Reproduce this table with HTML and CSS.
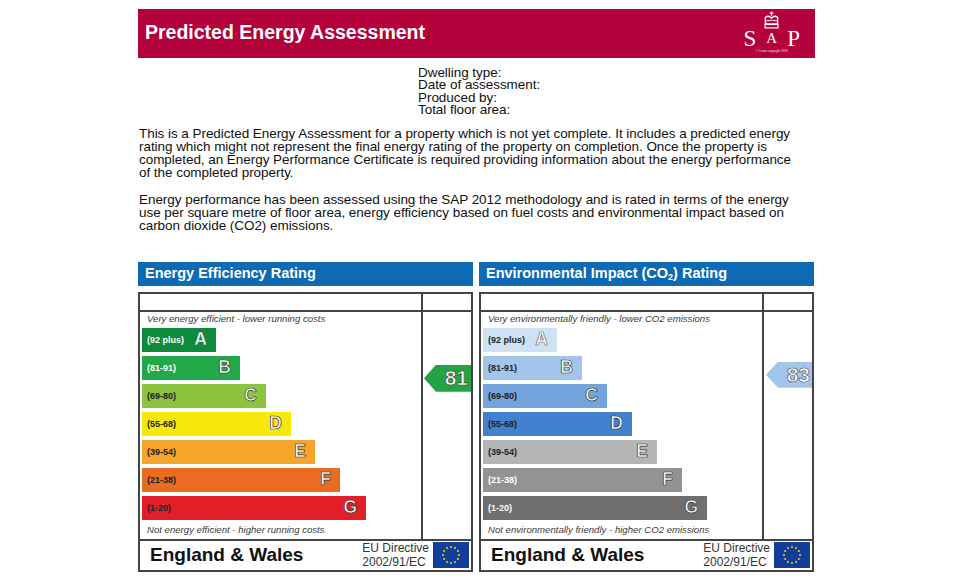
FILE: index.html
```html
<!DOCTYPE html>
<html lang="en">
<head>
<meta charset="utf-8">
<title>Predicted Energy Assessment</title>
<link rel="stylesheet" href="styles.css">
</head>
<body>
<div class="page">
  <header class="banner">
    <h1 class="banner-title">Predicted Energy Assessment</h1>
    <div class="sap">
      <div class="sap-letters">
        <span class="sap-big">S</span>
        <span class="sap-mid">
          <svg class="crown" width="15" height="18" viewBox="0 0 15 18">
            <path d="M7.5 0.4v4.4M5.6 2.2h3.8" stroke="#fff" stroke-width="1.3" fill="none"/>
            <path d="M1.4 12.8V6.4Q4.3 3.8 7.5 7Q10.7 3.8 13.6 6.4V12.8Z" stroke="#fff" stroke-width="1.3" fill="none"/>
            <path d="M1.4 10Q7.5 8.4 13.6 10" stroke="#fff" stroke-width="0.9" fill="none"/>
            <rect x="1" y="13.5" width="13" height="3.4" fill="none" stroke="#fff" stroke-width="1.2"/>
          </svg>
          <span class="sap-a">A</span>
        </span>
        <span class="sap-big">P</span>
      </div>
      <div class="sap-copy">© Crown copyright 2009</div>
    </div>
  </header>

  <div class="details">
    <div>Dwelling type:</div>
    <div>Date of assessment:</div>
    <div>Produced by:</div>
    <div>Total floor area:</div>
  </div>

  <p class="intro intro-first">This is a Predicted Energy Assessment for a property which is not yet complete. It includes a predicted energy<br>rating which might not represent the final energy rating of the property on completion. Once the property is<br>completed, an Energy Performance Certificate is required providing information about the energy performance<br>of the completed property.</p>
  <p class="intro intro-second">Energy performance has been assessed using the SAP 2012 methodology and is rated in terms of the energy<br>use per square metre of floor area, energy efficiency based on fuel costs and environmental impact based on<br>carbon dioxide (CO2) emissions.</p>

  <div class="charts">
    <section class="chart">
      <h2 class="chart-title">Energy Efficiency Rating</h2>
      <div class="chart-box">
        <div class="cell top-left"></div>
        <div class="cell top-right"></div>
        <div class="cell bands">
          <div class="caption">Very energy efficient - lower running costs</div>
          <div class="band-list">
            <div class="band ee-a light" style="width:74px"><span class="range">(92 plus)</span><span class="grade">A</span></div>
            <div class="band ee-b light" style="width:98px"><span class="range">(81-91)</span><span class="grade">B</span></div>
            <div class="band ee-c" style="width:124px"><span class="range">(69-80)</span><span class="grade">C</span></div>
            <div class="band ee-d" style="width:149px"><span class="range">(55-68)</span><span class="grade">D</span></div>
            <div class="band ee-e" style="width:173px"><span class="range">(39-54)</span><span class="grade">E</span></div>
            <div class="band ee-f" style="width:198px"><span class="range">(21-38)</span><span class="grade">F</span></div>
            <div class="band ee-g" style="width:224px"><span class="range">(1-20)</span><span class="grade">G</span></div>
          </div>
          <div class="caption caption-bottom">Not energy efficient - higher running costs</div>
        </div>
        <div class="cell current">
          <div class="pointer pointer-ee" style="margin-top:53px"><span>81</span></div>
        </div>
        <div class="chart-footer">
          <span class="region">England &amp; Wales</span>
          <span class="directive">EU Directive<br>2002/91/EC</span>
          <svg class="eu-flag" width="36" height="26" viewBox="0 0 36 26">
            <rect width="36" height="26" fill="#123d9a"/>
            <g fill="#f4d31a">
              <circle cx="18" cy="5" r="1"/>
              <circle cx="22" cy="6.1" r="1"/>
              <circle cx="24.9" cy="9" r="1"/>
              <circle cx="26" cy="13" r="1"/>
              <circle cx="24.9" cy="17" r="1"/>
              <circle cx="22" cy="19.9" r="1"/>
              <circle cx="18" cy="21" r="1"/>
              <circle cx="14" cy="19.9" r="1"/>
              <circle cx="11.1" cy="17" r="1"/>
              <circle cx="10" cy="13" r="1"/>
              <circle cx="11.1" cy="9" r="1"/>
              <circle cx="14" cy="6.1" r="1"/>
            </g>
          </svg>
        </div>
      </div>
    </section>

    <section class="chart">
      <h2 class="chart-title">Environmental Impact (CO<sub>2</sub>) Rating</h2>
      <div class="chart-box">
        <div class="cell top-left"></div>
        <div class="cell top-right"></div>
        <div class="cell bands">
          <div class="caption">Very environmentally friendly - lower CO2 emissions</div>
          <div class="band-list">
            <div class="band ei-a" style="width:74px"><span class="range">(92 plus)</span><span class="grade">A</span></div>
            <div class="band ei-b" style="width:99px"><span class="range">(81-91)</span><span class="grade">B</span></div>
            <div class="band ei-c" style="width:124px"><span class="range">(69-80)</span><span class="grade">C</span></div>
            <div class="band ei-d" style="width:149px"><span class="range">(55-68)</span><span class="grade">D</span></div>
            <div class="band ei-e" style="width:174px"><span class="range">(39-54)</span><span class="grade">E</span></div>
            <div class="band ei-f light" style="width:199px"><span class="range">(21-38)</span><span class="grade">F</span></div>
            <div class="band ei-g light" style="width:224px"><span class="range">(1-20)</span><span class="grade">G</span></div>
          </div>
          <div class="caption caption-bottom">Not environmentally friendly - higher CO2 emissions</div>
        </div>
        <div class="cell current">
          <div class="pointer pointer-ei" style="margin-top:50px"><span>83</span></div>
        </div>
        <div class="chart-footer">
          <span class="region">England &amp; Wales</span>
          <span class="directive">EU Directive<br>2002/91/EC</span>
          <svg class="eu-flag" width="36" height="26" viewBox="0 0 36 26">
            <rect width="36" height="26" fill="#123d9a"/>
            <g fill="#f4d31a">
              <circle cx="18" cy="5" r="1"/>
              <circle cx="22" cy="6.1" r="1"/>
              <circle cx="24.9" cy="9" r="1"/>
              <circle cx="26" cy="13" r="1"/>
              <circle cx="24.9" cy="17" r="1"/>
              <circle cx="22" cy="19.9" r="1"/>
              <circle cx="18" cy="21" r="1"/>
              <circle cx="14" cy="19.9" r="1"/>
              <circle cx="11.1" cy="17" r="1"/>
              <circle cx="10" cy="13" r="1"/>
              <circle cx="11.1" cy="9" r="1"/>
              <circle cx="14" cy="6.1" r="1"/>
            </g>
          </svg>
        </div>
      </div>
    </section>
  </div>
</div>
</body>
</html>
```

FILE: styles.css
```css
* { box-sizing: border-box; }

html, body {
  margin: 0;
  padding: 0;
  background: #ffffff;
}

body {
  font-family: "Liberation Sans", Arial, sans-serif;
  color: #111;
}

.page {
  width: 677px;
  margin-left: 138px;
  padding-top: 9px;
}

/* Banner */
.banner {
  height: 49px;
  background: #b4003b;
  display: flex;
  align-items: center;
  justify-content: space-between;
  padding: 0 15px 0 7px;
}

.banner-title {
  margin: -2px 0 0 0;
  color: #fff;
  font-size: 19.5px;
  font-weight: bold;
  line-height: 1;
}

.sap {
  align-self: flex-start;
  margin-top: 2px;
  display: flex;
  flex-direction: column;
  align-items: center;
  color: #fff;
}

.sap-letters {
  display: flex;
  align-items: flex-end;
  gap: 8px;
  font-family: "Liberation Serif", "Times New Roman", serif;
  line-height: 1;
}

.sap-big {
  font-size: 23px;
  margin-bottom: -4px;
}

.sap-mid {
  display: flex;
  flex-direction: column;
  align-items: center;
}

.crown {
  display: block;
  margin-bottom: 2px;
}

.sap-a {
  font-size: 15px;
  line-height: 1;
}

.sap-copy {
  font-size: 3px;
  line-height: 1;
  margin-top: 4px;
  opacity: 0.85;
  white-space: nowrap;
}

/* Details */
.details {
  margin: 9px 0 0 280px;
  font-size: 13.5px;
  line-height: 12.4px;
  letter-spacing: -0.05px;
  color: #111;
}

.intro {
  margin: 0;
  padding-left: 1px;
  font-size: 13.5px;
  line-height: 13px;
  letter-spacing: -0.05px;
  white-space: nowrap;
  color: #111;
}

.intro-first { margin-top: 10px; }
.intro-second { margin-top: 14px; }

/* Charts */
.charts {
  display: flex;
  gap: 6px;
  margin-top: 30px;
}

.chart {
  width: 335px;
}

.chart-title {
  margin: 0 0 6px 0;
  height: 24px;
  background: #0d6ab3;
  color: #fff;
  font-size: 14.5px;
  font-weight: bold;
  line-height: 22px;
  padding-left: 7px;
  white-space: nowrap;
}

.chart-title sub {
  font-size: 9px;
  line-height: 0;
  vertical-align: -2px;
}

.chart-box {
  border: 2px solid #444;
  height: 280px;
  display: grid;
  grid-template-columns: 1fr 48px;
  grid-template-rows: 18px 227px 31px;
}

.top-left {
  border-right: 2px solid #444;
  border-bottom: 2px solid #444;
}

.top-right {
  border-bottom: 2px solid #444;
}

.bands {
  border-right: 2px solid #444;
  padding: 1px 0 0 2px;
  display: flex;
  flex-direction: column;
}

.caption {
  font-size: 9.6px;
  font-style: italic;
  color: #3a3a3a;
  line-height: 11px;
  padding-left: 5px;
  white-space: nowrap;
}

.band-list {
  display: flex;
  flex-direction: column;
  gap: 4px;
  margin-top: 4px;
}

.caption-bottom {
  margin-top: 4px;
}

.band {
  height: 24px;
  display: flex;
  align-items: center;
  justify-content: space-between;
  padding: 0 9px 0 5px;
}

.range {
  font-size: 9px;
  font-weight: bold;
  color: #222;
  white-space: nowrap;
}

.light .range { color: #fff; }

.grade {
  font-size: 17.5px;
  font-weight: bold;
  line-height: 1;
  color: #fff;
  -webkit-text-stroke: 0.7px #333;
}

.ee-a { background: #0e8a3c; }
.ee-b { background: #22a84a; }
.ee-c { background: #8cc43f; }
.ee-d { background: #f7e80c; }
.ee-e { background: #f5a52a; }
.ee-f { background: #ea6c22; }
.ee-g { background: #e21f28; }

.ee-a .grade { -webkit-text-stroke: 0.4px #0b5e2a; }

.ei-a { background: #cfe2f4; }
.ei-b { background: #a3c5ea; }
.ei-c { background: #74a4dc; }
.ei-d { background: #4381cf; }
.ei-e { background: #b5b5b5; }
.ei-f { background: #939393; }
.ei-g { background: #6f6f6f; }

.ei-a .grade { -webkit-text-stroke: 0.7px #666; }

.current {
  display: flex;
  flex-direction: column;
  align-items: flex-end;
}

.pointer {
  width: 47px;
  height: 27px;
  clip-path: polygon(12px 0, 100% 0, 100% 100%, 12px 100%, 0 50%);
  display: flex;
  align-items: center;
  justify-content: flex-end;
  padding-right: 3px;
  font-size: 21px;
  font-weight: bold;
  color: #fff;
  -webkit-text-stroke: 0.6px #333;
}

.pointer-ee { background: #25a244; }
.pointer-ei { background: #a3c5ea; width: 46px; height: 26px; padding-right: 2px; -webkit-text-stroke: 0.7px #555; }

.chart-footer {
  grid-column: 1 / 3;
  border-top: 2px solid #444;
  display: flex;
  align-items: center;
  padding: 0 2px 0 10px;
}

.region {
  flex: 1;
  font-size: 19px;
  font-weight: bold;
  color: #111;
  white-space: nowrap;
}

.directive {
  font-size: 12px;
  line-height: 14px;
  color: #333;
  white-space: nowrap;
}

.eu-flag {
  display: block;
  margin-left: 4px;
}
```
